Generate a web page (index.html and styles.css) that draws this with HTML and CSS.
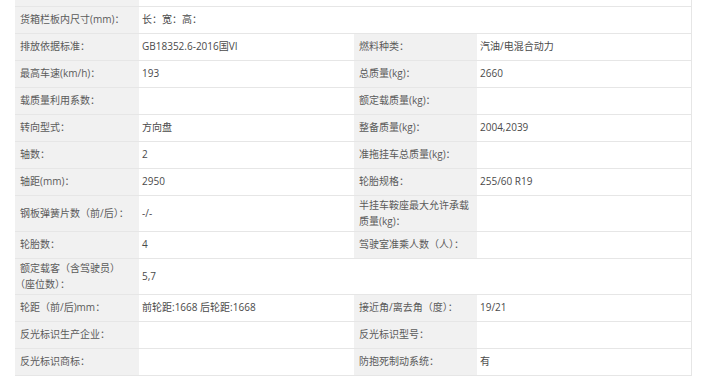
FILE: index.html
```html
<!DOCTYPE html>
<html lang="zh-CN">
<head>
<meta charset="utf-8">
<title>参数表</title>
<link rel="stylesheet" href="styles.css">
</head>
<body>
<div class="wrap">
<table class="spec">
<colgroup>
<col class="c-label"><col class="c-value"><col class="c-label2"><col class="c-value2">
</colgroup>
<tbody>
<tr class="cut"><td class="lb"></td><td class="vl" colspan="3"></td></tr>
<tr><td class="lb">货箱栏板内尺寸(mm)：</td><td class="vl" colspan="3">长：宽：高：</td></tr>
<tr><td class="lb">排放依据标准：</td><td class="vl">GB18352.6-2016国VI</td><td class="lb">燃料种类：</td><td class="vl">汽油/电混合动力</td></tr>
<tr><td class="lb">最高车速(km/h)：</td><td class="vl">193</td><td class="lb">总质量(kg)：</td><td class="vl">2660</td></tr>
<tr><td class="lb">载质量利用系数：</td><td class="vl"></td><td class="lb">额定载质量(kg)：</td><td class="vl"></td></tr>
<tr><td class="lb">转向型式：</td><td class="vl">方向盘</td><td class="lb">整备质量(kg)：</td><td class="vl">2004,2039</td></tr>
<tr><td class="lb">轴数：</td><td class="vl">2</td><td class="lb">准拖挂车总质量(kg)：</td><td class="vl"></td></tr>
<tr><td class="lb">轴距(mm)：</td><td class="vl">2950</td><td class="lb">轮胎规格：</td><td class="vl">255/60 R19</td></tr>
<tr><td class="lb">钢板弹簧片数（前/后）：</td><td class="vl">-/-</td><td class="lb">半挂车鞍座最大允许承载质量(kg)：</td><td class="vl"></td></tr>
<tr><td class="lb">轮胎数：</td><td class="vl">4</td><td class="lb">驾驶室准乘人数（人）：</td><td class="vl"></td></tr>
<tr><td class="lb">额定载客（含驾驶员）<span class="nw">（座位数）：</span></td><td class="vl" colspan="3">5,7</td></tr>
<tr><td class="lb">轮距（前/后)mm：</td><td class="vl">前轮距:1668 后轮距:1668</td><td class="lb">接近角/离去角（度）：</td><td class="vl">19/21</td></tr>
<tr><td class="lb">反光标识生产企业：</td><td class="vl"></td><td class="lb">反光标识型号：</td><td class="vl"></td></tr>
<tr><td class="lb">反光标识商标：</td><td class="vl"></td><td class="lb">防抱死制动系统：</td><td class="vl">有</td></tr>
</tbody>
</table>
</div>
</body>
</html>
```
FILE: styles.css
```css
html, body {
  margin: 0;
  padding: 0;
  background: #ffffff;
}
body {
  font-family: "Open Sans", "Noto Sans CJK SC", sans-serif;
  font-size: 10px;
  color: #555555;
}
.wrap {
  padding-left: 15px;
}
.spec {
  width: 676px;
  table-layout: fixed;
  border-collapse: collapse;
  border-right: 1px solid #e6e6e6;
}
.c-label { width: 124px; }
.c-value { width: 215px; }
.c-label2 { width: 123px; }
.c-value2 { width: 214px; }
.spec td {
  height: 22px;
  padding: 2px 3px 2px 5px;
  line-height: 15.5px;
  vertical-align: middle;
  border-bottom: 1px solid #e6e6e6;
  word-break: break-all;
}
.spec td.lb {
  background: #f1f1f1;
  color: #5a5a5a;
}
.spec td.vl {
  background: #ffffff;
  padding-left: 3px;
  color: #4a4a4a;
}
.nw {
  white-space: nowrap;
}
.spec tr.cut td {
  height: 6px;
  padding: 0;
  line-height: 0;
}
```
